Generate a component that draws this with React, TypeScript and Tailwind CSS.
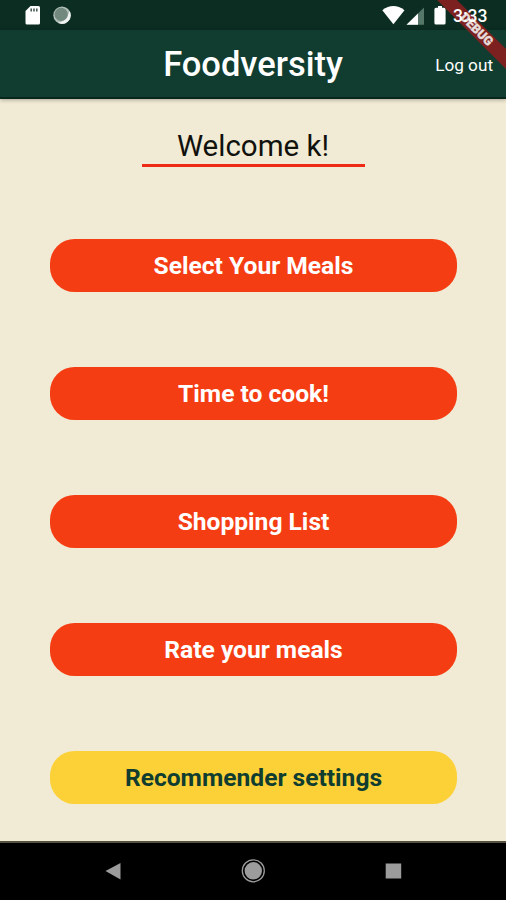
import clsx from 'clsx';

type MenuItem = {
  label: string;
  accent?: boolean;
};

const MENU: MenuItem[] = [
  { label: 'Select Your Meals' },
  { label: 'Time to cook!' },
  { label: 'Shopping List' },
  { label: 'Rate your meals' },
  { label: 'Recommender settings', accent: true },
];

function StatusBar() {
  return (
    <div className="flex h-[30px] items-center bg-[#0b2d22] text-white">
      <svg className="ml-6 h-[30px] w-12" viewBox="0 0 48 30">
        <path d="M6.5 6H14.5Q16 6 16 7.5V23Q16 24.5 14.5 24.5H3Q1.5 24.5 1.5 23V11Z" fill="#fff" />
        <path d="M7.2 8.5v3M10 8.5v3M12.8 8.5v3" stroke="#4b5f56" strokeWidth="1.6" />
        <circle cx="38" cy="15.2" r="8.7" fill="#aebdb6" />
        <path d="M45.6 11A8.7 8.7 0 0 1 33.5 22.6Q42.5 22 45.6 11Z" fill="#eef2f0" />
        <circle cx="37.2" cy="14.4" r="6.6" fill="#72897f" />
      </svg>
      <svg className="ml-auto h-[30px] w-[68px]" viewBox="0 0 68 30">
        <path d="M2.3 10.2Q13.4 2 24.5 10.2L13.4 24.2Z" fill="#fff" />
        <path d="M44 7.5V24.7H26.5Z" fill="#54776a" />
        <path d="M38 13.4V24.7H26.5Z" fill="#fff" />
        <path
          d="M58 6h4v1.8h2q1.6 0 1.6 1.6v13.5q0 1.6-1.6 1.6h-8q-1.6 0-1.6-1.6V9.4q0-1.6 1.6-1.6h2Z"
          fill="#fff"
        />
      </svg>
      <span className="relative z-20 mr-[19px] ml-[5px] w-[34px] pt-[3px] text-[17.5px] leading-none font-medium whitespace-nowrap">
        3:33
      </span>
    </div>
  );
}

function DebugBanner() {
  return (
    <div className="pointer-events-none absolute top-0 right-0 z-10 h-20 w-20 overflow-hidden">
      <div className="absolute top-[23px] left-[-9px] flex h-[14px] w-[120px] rotate-45 items-center justify-center bg-[#7d2120] pr-px text-[12.5px] leading-none font-black text-[#e6dcda] [-webkit-text-stroke:0.4px_#e6dcda]">
        DEBUG
      </div>
    </div>
  );
}

function NavBar() {
  return (
    <nav className="h-[59px] border-t-2 border-[#55533f] bg-black">
      <svg className="h-[57px] w-full" viewBox="0 0 506 57">
        <path d="M105.5 28L120.5 20V36.5Z" fill="#9c9c9c" />
        <circle cx="253.3" cy="27.8" r="11" fill="none" stroke="#9c9c9c" strokeWidth="1.3" />
        <circle cx="253.3" cy="27.8" r="8.7" fill="#9c9c9c" />
        <rect x="385.7" y="20.5" width="15.5" height="15" fill="#9c9c9c" />
      </svg>
    </nav>
  );
}

export default function App() {
  return (
    <div className="relative flex h-[900px] w-[506px] flex-col overflow-hidden bg-[#f1ebd5] font-['Roboto',sans-serif]">
      <StatusBar />
      <DebugBanner />

      {/* App bar */}
      <header className="grid h-[69px] grid-cols-[1fr_auto_1fr] items-center border-b-2 border-[#08271c] bg-[#103d2f] text-white shadow-[0_1px_4px_rgba(0,0,0,0.3)]">
        <h1 className="col-start-2 pt-0.5 text-[34.5px] leading-none font-medium">Foodversity</h1>
        <button className="mr-[13px] justify-self-end pt-[5px] text-[17.2px] leading-none">Log out</button>
      </header>

      <main className="flex flex-1 flex-col items-center">
        <div className="mt-[29px] flex h-[39px] w-[223px] justify-center border-b-[3px] border-[#ee2a14] pt-px">
          <p className="text-[29.5px] leading-[34px] whitespace-nowrap text-[#11110d]">Welcome k!</p>
        </div>

        <div className="mt-[72px] ml-px flex w-[407px] flex-col gap-[75.5px]">
          {MENU.map(({ label, accent }) => (
            <button
              key={label}
              className={clsx(
                'h-[52.6px] rounded-[24.6px] pt-0.5 text-[24.6px] leading-none font-bold',
                accent ? 'bg-[#fbd137] text-[#103d2f]' : 'bg-[#f53d14] text-white',
              )}
            >
              {label}
            </button>
          ))}
        </div>
      </main>

      <NavBar />
    </div>
  );
}
